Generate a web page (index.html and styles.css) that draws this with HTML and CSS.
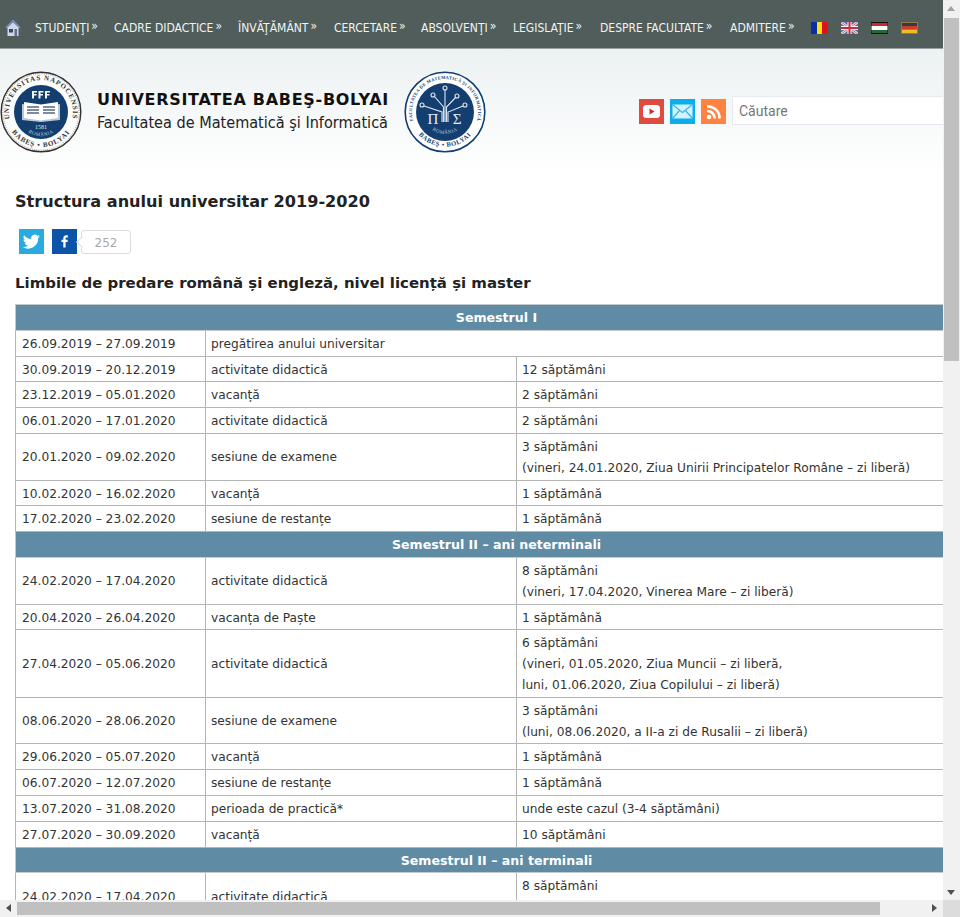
FILE: index.html
```html
<!DOCTYPE html>
<html lang="ro">
<head>
<meta charset="utf-8">
<title>Structura anului universitar 2019-2020</title>
<link rel="stylesheet" href="styles.css">
</head>
<body>
<div class="window">
<div class="viewport">
<div class="page">
  <nav class="nav">
    <svg class="home" viewBox="0 0 16 18" width="16" height="18"><path d="M8 1 0.500 8.500 2.500 8.500 2.500 17 13.500 17 13.500 8.500 15.500 8.500Z" fill="#cfd8e4"/><path d="M8 1 0.500 8.500 2.500 8.500 8 3.500 13.500 8.500 15.500 8.500Z" fill="#6a86c4"/><rect x="4" y="10" width="4" height="3.500" fill="#2f4770"/><rect x="9.500" y="10" width="2.500" height="7" fill="#5a6f92"/></svg>
    <a class="nav-item i1">STUDENŢI<span class="raq">»</span></a>
    <a class="nav-item i2">CADRE DIDACTICE<span class="raq">»</span></a>
    <a class="nav-item i3">ÎNVĂŢĂMÂNT<span class="raq">»</span></a>
    <a class="nav-item i4">CERCETARE<span class="raq">»</span></a>
    <a class="nav-item i5">ABSOLVENŢI<span class="raq">»</span></a>
    <a class="nav-item i6">LEGISLAŢIE<span class="raq">»</span></a>
    <a class="nav-item i7">DESPRE FACULTATE<span class="raq">»</span></a>
    <a class="nav-item i8">ADMITERE<span class="raq">»</span></a>
    <div class="flags">
      <svg width="17" height="12" viewBox="0 0 17 12"><rect width="6" height="12" fill="#0a2ea8"/><rect x="6" width="5" height="12" fill="#fbe10a"/><rect x="11" width="6" height="12" fill="#e0101c"/></svg>
      <svg width="17" height="12" viewBox="0 0 17 12"><rect width="17" height="12" fill="#5a70b4"/><path d="M0 0 17 12M17 0 0 12" stroke="#f2f2f2" stroke-width="2.400"/><path d="M0 0 17 12M17 0 0 12" stroke="#d23a4a" stroke-width=".8"/><path d="M8.500 0V12M0 6H17" stroke="#f2f2f2" stroke-width="4"/><path d="M8.500 0V12M0 6H17" stroke="#d2283a" stroke-width="2"/></svg>
      <svg width="17" height="12" viewBox="0 0 17 12"><rect width="17" height="12" fill="#111"/><rect x=".5" y="1" width="16" height="3" fill="#c92a2a"/><rect x=".5" y="4" width="16" height="4" fill="#fff"/><rect x=".5" y="8" width="16" height="3" fill="#1e6b35"/></svg>
      <svg width="17" height="12" viewBox="0 0 17 12"><rect width="17" height="12" fill="#8a7c50"/><rect x="1" y="1" width="15" height="3.300" fill="#3a3a3a"/><rect x="1" y="4.300" width="15" height="3.400" fill="#d43a2a"/><rect x="1" y="7.700" width="15" height="3.300" fill="#f0bd28"/></svg>
    </div>
  </nav>
  <header class="masthead">
    <svg class="seal" width="82" height="82" viewBox="0 0 82 82">
      <defs>
        <path id="top1" d="M10.900 52A32 32 0 1 1 71.100 52"/>
        <path id="bot1" d="M10 58A35.500 35.500 0 0 0 72 58"/>
        <path id="rom1" d="M21.300 54.800A24 24 0 0 0 60.700 54.800"/>
      </defs>
      <circle cx="41" cy="41" r="39.800" fill="#fbfcfc" stroke="#33302e" stroke-width="1.400"/>
      <circle cx="41" cy="41" r="38.200" fill="none" stroke="#77706a" stroke-width=".7" stroke-dasharray="1 1.200"/>
      <circle cx="41" cy="41" r="27" fill="#143e70"/>
      <text class="seal-text"><textPath href="#top1" startOffset="50%" text-anchor="middle">UNIVERSITAS NAPOCENSIS</textPath></text>
      <text class="seal-text"><textPath href="#bot1" startOffset="50%" text-anchor="middle">BABEŞ • BOLYAI</textPath></text>
      <path d="M22 33 41 36 60 33V49L41 51 22 49Z" fill="#b9c7d8"/>
      <path d="M24 31 41 33.500 58 31V47L41 49.500 24 47Z" fill="#fff"/>
      <path d="M27 36H39M27 39H39M27 42H39M43 36H55M43 39H55M43 42H55" stroke="#56677e" stroke-width="1.300"/>
      <path d="M32 20H37V21.500H34V23H36.500V24.500H34V27.500H32ZM38.500 20H43.500V21.500H40.500V23H43V24.500H40.500V27.500H38.500ZM45 20H50V21.500H47V23H49.500V24.500H47V27.500H45Z" fill="#f2f5f8"/>
      <text class="seal-year" x="41" y="57.500" text-anchor="middle">1581</text>
      <text class="seal-small"><textPath href="#rom1" startOffset="50%" text-anchor="middle">ROMÂNIA</textPath></text>
    </svg>
    <div class="brand">
      <div class="brand-name">UNIVERSITATEA BABEŞ-BOLYAI</div>
      <div class="brand-sub">Facultatea de Matematică şi Informatică</div>
    </div>
    <svg class="seal seal2" width="82" height="82" viewBox="0 0 82 82">
      <defs>
        <path id="top2" d="M9.900 52A33 33 0 1 1 72.100 52"/>
        <path id="bot2" d="M10 57A35 35 0 0 0 72 57"/>
        <path id="rom2" d="M24 55A22 22 0 0 0 58 55"/>
      </defs>
      <circle cx="41" cy="41" r="39.800" fill="#fff" stroke="#143e70" stroke-width="1.600"/>
      <circle cx="41" cy="41" r="29" fill="#143e70"/>
      <text class="seal-text thin"><textPath href="#top2" startOffset="50%" text-anchor="middle">FACULTATEA DE MATEMATICĂ ŞI INFORMATICĂ</textPath></text>
      <text class="seal-text blue"><textPath href="#bot2" startOffset="50%" text-anchor="middle">BABEŞ • BOLYAI</textPath></text>
      <g fill="none" stroke="#dce6f0" stroke-width="1.100">
        <path d="M38 51V41L20 35"/><path d="M39.500 51V36L30 25"/><path d="M41 51V19"/><path d="M42.500 51V36L52 26"/><path d="M44 51V41L59 35"/>
        <circle cx="18" cy="34" r="2"/><circle cx="29" cy="24" r="2"/><circle cx="41" cy="17" r="2"/><circle cx="53" cy="25" r="2"/><circle cx="61" cy="34" r="2"/>
      </g>
      <text class="seal-greek" x="29" y="53" text-anchor="middle">Π</text>
      <text class="seal-greek" x="53" y="53" text-anchor="middle">Σ</text>
      <text class="seal-small"><textPath href="#rom2" startOffset="50%" text-anchor="middle">ROMÂNIA</textPath></text>
    </svg>
    <div class="tools">
      <svg width="25" height="25" viewBox="0 0 25 25"><rect width="25" height="25" fill="#e04b41"/><rect x="4" y="6" width="17" height="13" rx="3.500" fill="#fff"/><path d="M10.500 9.500 15.500 12.500 10.500 15.500Z" fill="#d3262a"/></svg>
      <svg width="25" height="25" viewBox="0 0 25 25"><rect width="25" height="25" fill="#0aaeea"/><path d="M2.500 5.500H22.500V19.500H2.500Z" fill="#d4f1fc"/><path d="M2.500 5.500 12.500 13.500 22.500 5.500M2.500 19.500 9.500 11.500M22.500 19.500 15.500 11.500" fill="none" stroke="#35b8ec" stroke-width="1.200"/></svg>
      <svg width="25" height="25" viewBox="0 0 25 25"><rect width="25" height="25" fill="#ff8240"/><circle cx="8" cy="18" r="2.300" fill="#fff"/><path d="M6 12A7 7 0 0 1 13.500 19.500M6 7.500A11.500 11.500 0 0 1 18.500 19.500" fill="none" stroke="#fff" stroke-width="2.600"/></svg>
      <input class="search" type="text" placeholder="Căutare">
    </div>
  </header>
  <main class="content">
    <h1>Structura anului universitar 2019-2020</h1>
    <div class="share">
      <svg width="25" height="25" viewBox="0 0 25 25"><rect width="25" height="25" fill="#29abe2"/><path d="M21 7.200c-.7.300-1.300.5-2 .6.700-.4 1.300-1.100 1.500-1.900-.7.400-1.400.7-2.200.9a3.500 3.500 0 0 0-6 3.200C9.400 9.800 6.800 8.400 5 6.200c-1 1.600-.5 3.700 1.100 4.700-.6 0-1.100-.2-1.600-.4 0 1.700 1.200 3.100 2.800 3.500-.5.100-1 .2-1.600.1.400 1.400 1.700 2.400 3.300 2.400A7 7 0 0 1 3.800 18a10 10 0 0 0 15.400-8.900c.7-.5 1.300-1.100 1.800-1.900Z" fill="#fff"/></svg>
      <svg class="fb" width="25" height="25" viewBox="0 0 25 25"><rect width="25" height="25" fill="#0b54a8"/><path d="M13.600 18.500V13H15.500L15.800 10.800H13.600V9.500C13.600 8.800 13.800 8.400 14.700 8.400H15.900V6.400C15.600 6.400 15 6.300 14.200 6.300 12.500 6.300 11.300 7.400 11.300 9.200V10.800H9.500V13H11.300V18.500Z" fill="#fff"/></svg>
      <span class="count">252</span>
    </div>
    <h2>Limbile de predare română și engleză, nivel licență și master</h2>
    <table class="calendar">
      <colgroup><col class="c1"><col class="c2"><col class="c3"></colgroup>
      <tr><th colspan="3">Semestrul I</th></tr>
      <tr><td>26.09.2019 – 27.09.2019</td><td colspan="2">pregătirea anului universitar</td></tr>
      <tr><td>30.09.2019 – 20.12.2019</td><td>activitate didactică</td><td>12 săptămâni</td></tr>
      <tr><td>23.12.2019 – 05.01.2020</td><td>vacanță</td><td>2 săptămâni</td></tr>
      <tr><td>06.01.2020 – 17.01.2020</td><td>activitate didactică</td><td>2 săptămâni</td></tr>
      <tr><td>20.01.2020 – 09.02.2020</td><td>sesiune de examene</td><td>3 săptămâni<br>(vineri, 24.01.2020, Ziua Unirii Principatelor Române – zi liberă)</td></tr>
      <tr><td>10.02.2020 – 16.02.2020</td><td>vacanță</td><td>1 săptămână</td></tr>
      <tr><td>17.02.2020 – 23.02.2020</td><td>sesiune de restanțe</td><td>1 săptămână</td></tr>
      <tr><th colspan="3">Semestrul II – ani neterminali</th></tr>
      <tr><td>24.02.2020 – 17.04.2020</td><td>activitate didactică</td><td>8 săptămâni<br>(vineri, 17.04.2020, Vinerea Mare – zi liberă)</td></tr>
      <tr><td>20.04.2020 – 26.04.2020</td><td>vacanța de Paște</td><td>1 săptămână</td></tr>
      <tr><td>27.04.2020 – 05.06.2020</td><td>activitate didactică</td><td>6 săptămâni<br>(vineri, 01.05.2020, Ziua Muncii – zi liberă,<br>luni, 01.06.2020, Ziua Copilului – zi liberă)</td></tr>
      <tr><td>08.06.2020 – 28.06.2020</td><td>sesiune de examene</td><td>3 săptămâni<br>(luni, 08.06.2020, a II-a zi de Rusalii – zi liberă)</td></tr>
      <tr><td>29.06.2020 – 05.07.2020</td><td>vacanță</td><td>1 săptămână</td></tr>
      <tr><td>06.07.2020 – 12.07.2020</td><td>sesiune de restanțe</td><td>1 săptămână</td></tr>
      <tr><td>13.07.2020 – 31.08.2020</td><td>perioada de practică*</td><td>unde este cazul (3-4 săptămâni)</td></tr>
      <tr><td>27.07.2020 – 30.09.2020</td><td>vacanță</td><td>10 săptămâni</td></tr>
      <tr><th colspan="3">Semestrul II – ani terminali</th></tr>
      <tr><td>24.02.2020 – 17.04.2020</td><td>activitate didactică</td><td>8 săptămâni<br>(vineri, 17.04.2020, Vinerea Mare – zi liberă)</td></tr>
    </table>
  </main>
</div>
</div>
<div class="vbar">
  <span class="arrow up"></span>
  <div class="vtrack"><div class="vthumb"></div></div>
  <span class="arrow down"></span>
</div>
<div class="hbar">
  <span class="arrow left"></span>
  <div class="htrack"><div class="hthumb"></div></div>
  <span class="arrow right"></span>
</div>
<div class="corner"></div>
</div>
</body>
</html>
```
FILE: styles.css
```css
* { box-sizing: border-box; }
html, body { margin: 0; padding: 0; height: 100%; overflow: hidden; background: #fff; }
body { font-family: "DejaVu Sans", Verdana, sans-serif; color: #222; }

.window { display: grid; grid-template-columns: 943px 17px; grid-template-rows: 900px 17px; width: 960px; height: 917px; }
.viewport { overflow: hidden; }
.page { width: 993px; }

.nav { display: flex; align-items: center; width: 943px; height: 49px; background: #505d5a; border-bottom: 1px solid #9aa3a1; padding: 7px 0 0 5px; }
.home { flex: none; margin-right: 14px; }
.nav-item { font-family: "DejaVu Sans Condensed", "DejaVu Sans", sans-serif; font-size: 12px; color: #f0f3f3; white-space: nowrap; flex: none; }
.raq { font-size: 12px; position: relative; top: -2px; margin-left: 2px; }
.i1 { width: 79px; } .i2 { width: 124px; } .i3 { width: 96px; } .i4 { width: 87px; }
.i5 { width: 92px; } .i6 { width: 87px; } .i7 { width: 130px; } .i8 { width: 81px; }
.flags { display: flex; gap: 13px; }

.masthead { display: flex; align-items: center; width: 943px; height: 126px; padding: 0 0 1px 0; background: linear-gradient(#ecf1f2, #ffffff); }
.seal { flex: none; }
.seal-text { font-family: "Liberation Serif", serif; font-size: 7px; font-weight: 700; letter-spacing: .9px; fill: #333; }
.seal-text.thin { fill: #143e70; font-size: 4.500px; letter-spacing: .3px; }
.seal-text.blue { fill: #143e70; font-size: 6.500px; letter-spacing: .6px; }
.seal-year { font-family: "Liberation Serif", serif; font-size: 6px; fill: #dfe6ee; }
.seal-small { font-family: "Liberation Serif", serif; font-size: 5px; letter-spacing: .4px; fill: #b9c9da; }
.seal-greek { font-family: "Liberation Serif", serif; font-size: 15px; fill: #e6edf4; }
.brand { margin: 0 0 2px 15px; width: 307px; flex: none; }
.brand-name { font-size: 16px; font-weight: 700; letter-spacing: .7px; color: #111; line-height: 23px; white-space: nowrap; }
.brand-sub { font-family: "DejaVu Sans Condensed", "DejaVu Sans", sans-serif; font-size: 16.100px; color: #222; line-height: 23px; white-space: nowrap; }
.tools { display: flex; align-items: center; gap: 6px; margin-left: 153px; flex: none; }
.search { width: 300px; height: 29px; margin-top: -2px; border: 1px solid #e6eaee; background: #fff; padding: 0 6px; font-family: "Roboto", sans-serif; font-size: 14px; color: #777; }
.search::placeholder { color: #777; opacity: 1; }

.content { padding: 0 0 0 15px; }
h1 { font-size: 16.100px; font-weight: 700; line-height: 24px; margin: 15px 0 0; color: #222; }
.share { display: flex; align-items: center; height: 25px; margin: 15px 0 0 4px; }
.fb { margin-left: 8px; }
.count { position: relative; width: 50px; height: 24px; margin-left: 4px; border: 1px solid #ddd; border-radius: 3px; font-size: 12px; line-height: 24px; color: #aaa; text-align: center; }
.count::before { content: ""; position: absolute; left: -4px; top: 7px; width: 7px; height: 7px; background: #fff; border-left: 1px solid #ddd; border-bottom: 1px solid #ddd; transform: rotate(45deg); }
h2 { font-size: 14.950px; font-weight: 700; line-height: 24px; margin: 17px 0 0; color: #222; }

.calendar { border-collapse: collapse; table-layout: fixed; width: 962px; margin-top: 9px; font-size: 12.200px; line-height: 20.800px; color: #333; }
.c1 { width: 190px; } .c2 { width: 311px; } .c3 { width: 461px; }
.calendar td { border: 1px solid #b4b4b4; padding: 3px 5px 1px; }
.calendar td:first-child { padding-left: 6px; }
.calendar th { border: 1px solid #c2c8cc; padding: 3px 5px 1px; background: #5f8ba4; color: #fff; font-size: 12.600px; font-weight: 700; }

.vbar { grid-column: 2; grid-row: 1; display: flex; flex-direction: column; background: #f1f1f1; }
.vtrack { flex: 1; }
.vthumb { width: 15px; height: 343px; margin: 1px 1px 0; background: #c0c0c0; }
.hbar { grid-column: 1; grid-row: 2; display: flex; background: #f1f1f1; }
.htrack { flex: 1; }
.hthumb { width: 863px; height: 13px; margin-top: 2px; background: #c0c0c0; }
.corner { grid-column: 2; grid-row: 2; background: #dcdcdc; }
.arrow { flex: none; display: block; width: 17px; height: 17px; position: relative; }
.arrow::after { content: ""; position: absolute; left: 4px; top: 6px; border: 4px solid transparent; border-top: 0; border-bottom: 5px solid #a3a3a3; }
.arrow.down::after { border-bottom: 0; border-top: 5px solid #505050; top: 7px; }
.arrow.left::after { left: 6px; top: 4px; border: 4px solid transparent; border-left: 0; border-right: 5px solid #505050; }
.arrow.right::after { left: 6px; top: 4px; border: 4px solid transparent; border-right: 0; border-left: 5px solid #505050; }
```
